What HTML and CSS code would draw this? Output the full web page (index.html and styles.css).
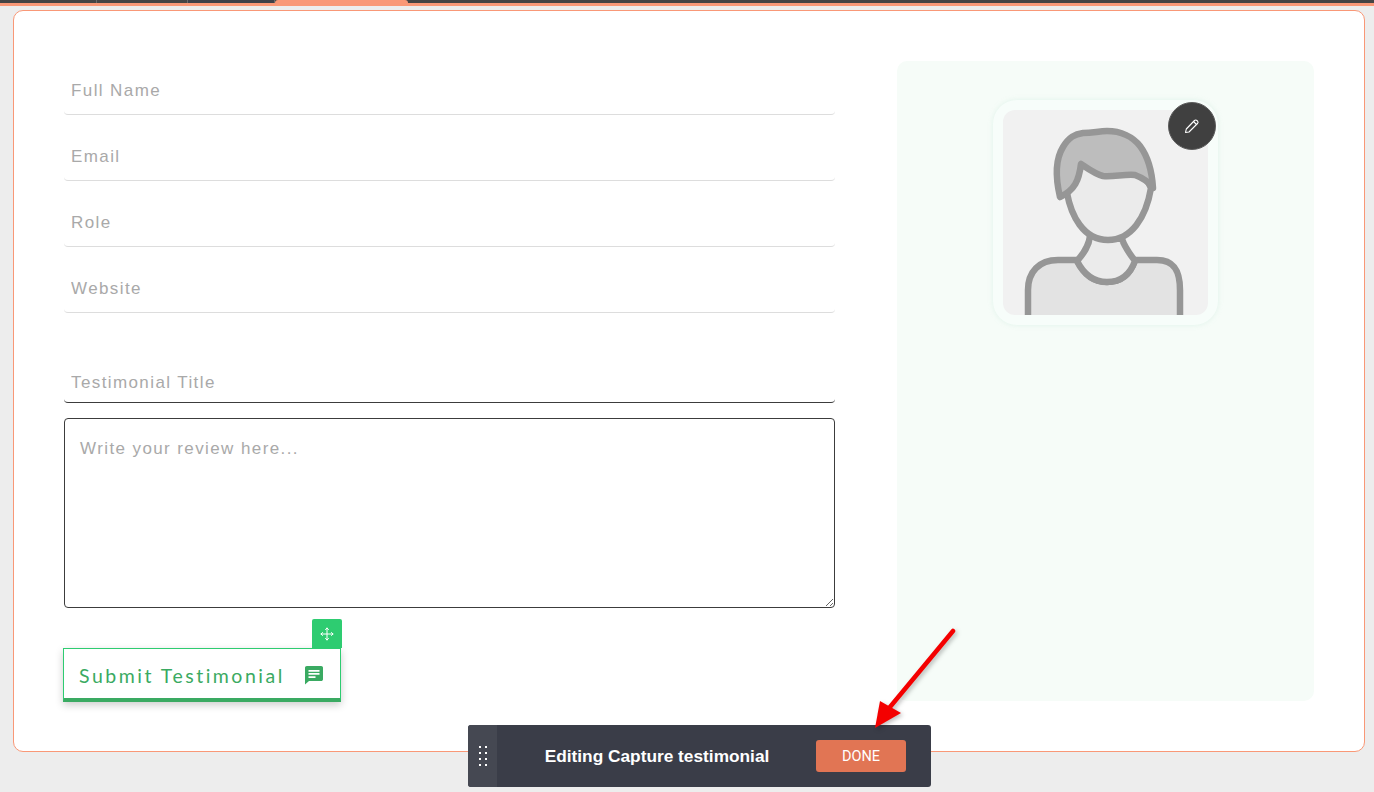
FILE: index.html
```html
<!DOCTYPE html>
<html>
<head>
  <meta charset="UTF-8">
  <title>Capture testimonial</title>
  <link rel="stylesheet" href="styles.css">
</head>
<body>

  <div class="topbar">
    <div class="tab tab-first"></div>
    <div class="tab"></div>
    <div class="tab tab-dark"></div>
    <div class="tab tab-active"></div>
  </div>

  <div class="card">
    <form class="review-form" onsubmit="event.preventDefault();">
      <input class="line-input" type="text" placeholder="Full Name">
      <input class="line-input" type="text" placeholder="Email">
      <input class="line-input" type="text" placeholder="Role">
      <input class="line-input" type="text" placeholder="Website">
      <input class="line-input title-input" type="text" placeholder="Testimonial Title">
      <textarea class="review-text" placeholder="Write your review here..."></textarea>

      <div class="submit-wrap">
        <span class="move-handle">
          <svg width="14" height="14" viewBox="0 0 14 14" fill="none" stroke="#fff" stroke-width="1" stroke-linecap="round" stroke-linejoin="round">
            <path d="M7 1v12M1 7h12M5.5 2.5 7 1l1.500 1.500M5.500 11.500 7 13l1.500-1.500M2.500 5.500 1 7l1.500 1.500M11.500 5.500 13 7l-1.500 1.500"/>
          </svg>
        </span>
        <button class="submit-btn" type="submit">
          <span>Submit Testimonial</span>
          <svg width="20" height="20" viewBox="0 0 20 20">
            <path fill="#3aaa62" d="M2.800 1h14.400c1 0 1.800.8 1.800 1.800v11.400c0 1-.8 1.800-1.800 1.800H5l-4 3.500V2.800C1 1.800 1.800 1 2.800 1z"/>
            <path fill="#fff" d="M4.500 5h11v1.700h-11zM4.500 8.100h11v1.700h-11zM4.500 11.200h7v1.700h-7z"/>
          </svg>
        </button>
      </div>
    </form>

    <div class="photo-panel">
      <div class="photo-frame">
        <div class="photo">
          <svg width="205" height="205" viewBox="0 0 205 205">
            <path fill="#e3e3e3" stroke="#969696" stroke-width="6.500" d="M25 212V180c0-18 11-30 30-30h19c7 15 17 22 30 22s23-7 28-22h22c18 0 23 12 23 30v32z"/>
            <path fill="#ebebeb" stroke="#969696" stroke-width="6.500" stroke-linejoin="round" d="M87 126c-1 10-6 17-13 25 7 14 17 21 30 21s23-7 28-21c-5-7-10-13-13-22z"/>
            <path fill="#ebebeb" stroke="#969696" stroke-width="6.500" d="M64 83C68 105 80 130 105 130C128 130 143 108 148 78L130 40L80 40z"/>
            <path fill="#bdbdbd" stroke="#969696" stroke-width="6.500" stroke-linejoin="round" d="M57 87C53 70 52 50 60 37C66 27 72 24 80 23C90 23 96 21 104 21C118 21 130 27 137 36C146 48 149 62 150 78C146 72 140 68 132 65C122 64 110 67 100 66C92 64 84 58 78 54C76 70 72 80 57 87z"/>
          </svg>
        </div>
        <button class="edit-photo" type="button">
          <svg width="16" height="16" viewBox="0 0 16 16" fill="none" stroke="#fff" stroke-width="1.100" stroke-linejoin="round">
            <path d="M1.500 14.500l.8-3.500 8.200-8.500c.7-.7 1.700-.7 2.400 0l.6.6c.7.7.7 1.700 0 2.400L5 14z"/>
            <path d="M9.500 3.500l3 3"/>
          </svg>
        </button>
      </div>
    </div>
  </div>

  <div class="edit-bar">
    <div class="drag-grip">
      <span></span><span></span><span></span><span></span>
      <span></span><span></span><span></span><span></span>
    </div>
    <div class="edit-title">Editing Capture testimonial</div>
    <button class="done-btn" type="button">DONE</button>
  </div>

  <svg class="red-arrow" width="100" height="120" viewBox="0 0 100 120">
    <path d="M79 8 16 84" stroke="#f40000" stroke-width="4.500" stroke-linecap="round"/>
    <path d="M1 105 6 78 27 90z" fill="#f40000"/>
  </svg>

</body>
</html>
```

FILE: styles.css
```css
* {
  box-sizing: border-box;
}

html, body {
  height: 100%;
}

body {
  margin: 0;
  background: #ededed;
  font-family: 'Liberation Sans', sans-serif;
  overflow: hidden;
}

.topbar {
  display: flex;
  height: 6px;
  background: #444444;
  border-bottom: 3px solid #f99877;
}

.tab {
  width: 91px;
  height: 3px;
  border-right: 1px solid #6a6a6a;
}

.tab-first {
  width: 97px;
}

.tab-dark {
  width: 87px;
  background: #3c4049;
}

.tab-active {
  width: 133px;
  height: 6px;
  background: #f99877;
  border: none;
  border-radius: 3px 3px 0 0;
}

.card {
  display: flex;
  justify-content: space-between;
  width: 1352px;
  height: 742px;
  margin: 4px 0 0 13px;
  padding: 50px;
  background: #fff;
  border: 1px solid #f99877;
  border-radius: 10px;
}

.review-form {
  display: flex;
  flex-direction: column;
  width: 771px;
}

.review-form > * {
  flex-shrink: 0;
}

.line-input {
  display: block;
  width: 100%;
  height: 54px;
  margin-bottom: 12px;
  padding: 7px 7px 0;
  border: none;
  border-bottom: 1px solid #dddddd;
  border-radius: 0 0 4px 4px;
  outline: none;
  background: transparent;
  font-family: 'Liberation Sans', sans-serif;
  font-size: 17px;
  letter-spacing: 1.400px;
}

.line-input::placeholder,
.review-text::placeholder {
  color: #a9a9a9;
  opacity: 1;
}

.title-input {
  height: 55px;
  margin-top: 23px;
  margin-bottom: 15px;
  padding-top: 16px;
  border-bottom-color: #3c3c3c;
}

.review-text {
  display: block;
  width: 100%;
  height: 190px;
  padding: 20px 15px;
  border: 1px solid #3c3c3c;
  border-radius: 4px;
  outline: none;
  font-family: 'Liberation Sans', sans-serif;
  font-size: 17px;
  letter-spacing: 1.400px;
}

.submit-wrap {
  position: relative;
  width: 278px;
  margin: 40px 0 0 -1px;
}

.move-handle {
  position: absolute;
  top: -29px;
  right: -1px;
  display: flex;
  align-items: center;
  justify-content: center;
  width: 30px;
  height: 29px;
  padding-right: 1px;
  background: #2ecc71;
  border-radius: 2px 2px 0 0;
}

.submit-btn {
  display: flex;
  align-items: center;
  justify-content: space-between;
  width: 100%;
  height: 54px;
  padding: 3px 16px 0 15px;
  background: #fff;
  border: 1px solid #2ecc71;
  border-bottom: 4px solid #3aaa62;
  box-shadow: 0 3px 8px rgba(0, 0, 0, 0.2);
  color: #3aaa62;
  font-family: 'Lato', sans-serif;
  font-size: 19.500px;
  letter-spacing: 2.500px;
  cursor: pointer;
}

.photo-panel {
  display: flex;
  justify-content: center;
  width: 417px;
  height: 640px;
  padding-top: 39px;
  background: #f6fcf8;
  border-radius: 10px;
}

.photo-frame {
  position: relative;
  width: 225px;
  height: 225px;
  padding: 10px;
  background: #f7fdfa;
  border-radius: 24px;
  box-shadow: 0 0 5px rgba(215, 240, 228, 0.7);
}

.photo {
  width: 205px;
  height: 205px;
  overflow: hidden;
  background: #f1f1f1;
  border-radius: 12px;
}

.photo svg {
  display: block;
}

.edit-photo {
  position: absolute;
  top: 2px;
  right: 2px;
  display: flex;
  align-items: center;
  justify-content: center;
  width: 48px;
  height: 48px;
  padding: 0;
  background: #404040;
  border: 1px solid #5c5c5c;
  border-radius: 50%;
  cursor: pointer;
}

.edit-bar {
  position: absolute;
  left: 468px;
  top: 725px;
  display: flex;
  align-items: center;
  width: 463px;
  height: 62px;
  background: #3a3d48;
  border-radius: 3px;
}

.drag-grip {
  display: grid;
  grid-template-columns: 2px 2px;
  gap: 4px 4px;
  align-content: center;
  justify-content: center;
  width: 29px;
  height: 100%;
  background: #454852;
  border-radius: 3px 0 0 3px;
}

.drag-grip span {
  width: 2px;
  height: 2px;
  background: #fff;
}

.edit-title {
  flex: 1;
  padding-left: 30px;
  text-align: center;
  color: #fff;
  font-family: 'Liberation Sans', sans-serif;
  font-size: 17.300px;
  font-weight: 700;
}

.done-btn {
  width: 90px;
  height: 32px;
  margin: 0 25px 0 29px;
  padding: 0;
  background: #e17554;
  border: none;
  border-radius: 3px;
  color: #fff;
  font-family: 'Roboto', sans-serif;
  font-size: 14.500px;
  cursor: pointer;
}

.red-arrow {
  position: absolute;
  left: 874px;
  top: 623px;
  filter: drop-shadow(2px 2px 2px rgba(0, 0, 0, 0.25));
}
```
